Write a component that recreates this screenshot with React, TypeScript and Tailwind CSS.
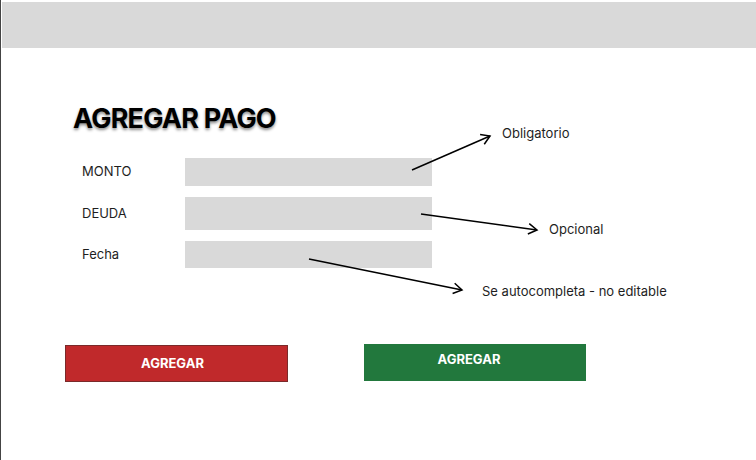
import React from "react";

type Arrow = { x1: number; y1: number; x2: number; y2: number };

const arrows: Arrow[] = [
  { x1: 411, y1: 170, x2: 489, y2: 136 },
  { x1: 420, y1: 214, x2: 536, y2: 230 },
  { x1: 308, y1: 259, x2: 461, y2: 290 },
];

function headPath(a: Arrow) {
  const ang = Math.atan2(a.y2 - a.y1, a.x2 - a.x1);
  const len = 10;
  const spread = 0.55;
  const p1x = a.x2 - len * Math.cos(ang - spread);
  const p1y = a.y2 - len * Math.sin(ang - spread);
  const p2x = a.x2 - len * Math.cos(ang + spread);
  const p2y = a.y2 - len * Math.sin(ang + spread);
  return `M${p1x} ${p1y} L${a.x2} ${a.y2} L${p2x} ${p2y}`;
}

function Field({ label, h }: { label: string; h: string }) {
  return (
    <div className="flex items-center">
      <span className="w-[103px] text-[13px] text-[#1e1e1e]">{label}</span>
      <div className={`w-[247px] bg-[#d9d9d9] ${h}`} />
    </div>
  );
}

export default function App() {
  return (
    <div
      className="relative w-[756px] h-[460px] overflow-hidden bg-white border-l border-[#444]"
      style={{ fontFamily: "Inter, 'Noto Sans', sans-serif" }}
    >
      {/* top bar */}
      <div className="mt-[2px] ml-[1px] h-[46px] bg-[#d9d9d9]" />

      <div className="pl-[72px] pt-[57px]">
        <h1 className="text-[27px] leading-none font-bold text-black tracking-[-0.8px] [text-shadow:0_2px_3px_rgba(0,0,0,0.45)]">
          AGREGAR PAGO
        </h1>

        <div className="mt-[26px] pl-[9px] flex flex-col gap-[11px]">
          <Field label="MONTO" h="h-[28px]" />
          <Field label="DEUDA" h="h-[33px]" />
          <Field label="Fecha" h="h-[27px]" />
        </div>
      </div>

      <div className="mt-[76px] flex items-start pl-[64px] gap-[76px]">
        <button className="w-[223px] h-[37px] mt-[1px] bg-[#c0292b] border border-[#7a2a2a] text-white text-[13px] font-bold pr-[8px]">
          AGREGAR
        </button>
        <button className="w-[222px] h-[37px] bg-[#22783d] text-white text-[13px] font-bold pr-[12px] pb-[6px]">
          AGREGAR
        </button>
      </div>

      {/* annotations */}
      <svg className="absolute inset-0 pointer-events-none" width="756" height="460">
        {arrows.map((a, i) => (
          <g key={i} stroke="#000" strokeWidth="1.5" fill="none">
            <line x1={a.x1} y1={a.y1} x2={a.x2} y2={a.y2} />
            <path d={headPath(a)} />
          </g>
        ))}
      </svg>
      <span className="absolute left-[501px] top-[124px] text-[13px] text-[#1e1e1e]">Obligatorio</span>
      <span className="absolute left-[548px] top-[220px] text-[13px] text-[#1e1e1e]">Opcional</span>
      <span className="absolute left-[481px] top-[282px] text-[13px] text-[#1e1e1e]">
        Se autocompleta - no editable
      </span>
    </div>
  );
}
